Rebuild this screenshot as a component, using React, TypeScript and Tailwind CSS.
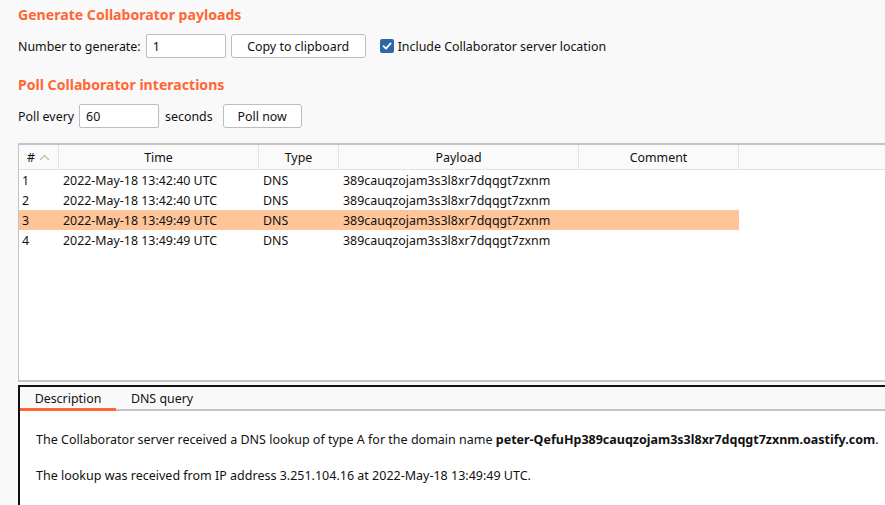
import React from "react";

const rows = [
  { n: "1", t: "2022-May-18 13:42:40 UTC", sel: false },
  { n: "2", t: "2022-May-18 13:42:40 UTC", sel: false },
  { n: "3", t: "2022-May-18 13:49:49 UTC", sel: true },
  { n: "4", t: "2022-May-18 13:49:49 UTC", sel: false },
];

const payload = "389cauqzojam3s3l8xr7dqqgt7zxnm";

export default function App() {
  return (
    <div
      className="w-[885px] h-[505px] overflow-hidden bg-[#f9f9f9] text-[#111] flex flex-col text-[12.4px]"
      style={{ fontFamily: '"Noto Sans", "Open Sans", sans-serif' }}
    >
      <div className="pl-[18px] flex flex-col">
        <div className="mt-[5px] h-[20px] leading-[20px] text-[14.1px] font-bold text-[#ff6633]">
          Generate Collaborator payloads
        </div>
        <div className="mt-[9px] h-[24px] flex items-center">
          <span className="pt-[2px]">Number to generate:</span>
          <div className="ml-[5px] w-[80px] h-[24px] bg-white border border-[#bdbdbd] rounded-[2px] flex items-center px-[6px] pt-[2px]">
            1
          </div>
          <div className="ml-[5px] w-[135px] h-[24px] bg-white border border-[#bdbdbd] rounded-[3px] flex items-center justify-center pt-[2px]">
            Copy to clipboard
          </div>
          <div className="ml-[14px] w-[14px] h-[14px] rounded-[2px] bg-[#2e67a6] flex items-center justify-center">
            <svg width="10" height="10" viewBox="0 0 10 10">
              <path d="M1.5 5.2 L4 7.6 L8.6 2.4" fill="none" stroke="white" strokeWidth="1.8" strokeLinecap="round" strokeLinejoin="round" />
            </svg>
          </div>
          <span className="ml-[4px] pt-[2px]">Include Collaborator server location</span>
        </div>
        <div className="mt-[17px] h-[20px] leading-[20px] text-[14.1px] font-bold text-[#ff6633]">
          Poll Collaborator interactions
        </div>
        <div className="mt-[9px] h-[24px] flex items-center">
          <span className="pt-[2px]">Poll every</span>
          <div className="ml-[5px] w-[80px] h-[24px] bg-white border border-[#bdbdbd] rounded-[2px] flex items-center px-[6px] pt-[2px]">
            60
          </div>
          <span className="ml-[6px] pt-[2px]">seconds</span>
          <div className="ml-[10px] w-[79px] h-[24px] bg-white border border-[#bdbdbd] rounded-[3px] flex items-center justify-center pt-[2px]">
            Poll now
          </div>
        </div>
      </div>

      <div className="ml-[18px] mt-[15px] h-[239px] bg-white border-t-2 border-l border-b-2 border-[#c4c4c4] flex flex-col">
        <div className="h-[25px] flex bg-[#fafafa] border-b border-[#e2e2e2]">
          <div className="w-[40px] flex items-center justify-center gap-[4px] border-r border-[#e2e2e2] pt-[3px]">
            <span>#</span>
            <svg width="11" height="7" viewBox="0 0 11 7" className="mb-[2px]">
              <path d="M1 6 L5.5 1.5 L10 6" fill="none" stroke="#b8b8b8" strokeWidth="1.1" />
            </svg>
          </div>
          <div className="w-[200px] flex items-center justify-center border-r border-[#e2e2e2] pt-[3px]">Time</div>
          <div className="w-[80px] flex items-center justify-center border-r border-[#e2e2e2] pt-[3px]">Type</div>
          <div className="w-[240px] flex items-center justify-center border-r border-[#e2e2e2] pt-[3px]">Payload</div>
          <div className="w-[160px] flex items-center justify-center border-r border-[#e2e2e2] pt-[3px]">Comment</div>
          <div className="flex-1" />
        </div>
        {rows.map((r) => (
          <div key={r.n} className="h-[20px] flex">
            <div className={`w-[720px] flex items-center pt-[3px] ${r.sel ? "bg-[#ffc599]" : ""}`}>
              <div className="w-[40px] pl-[3px]">{r.n}</div>
              <div className="w-[200px] pl-[4px]">{r.t}</div>
              <div className="w-[80px] pl-[4px]">DNS</div>
              <div className="w-[240px] pl-[4px]">{payload}</div>
              <div className="w-[160px]" />
            </div>
          </div>
        ))}
      </div>

      <div className="ml-[18px] mt-[3px] flex-1 flex flex-col border-t-2 border-l-2 border-[#111]">
        <div className="h-[24px] flex bg-[#f9f9f9] border-b-2 border-[#c4c4c4]">
          <div className="w-[96px] flex items-center justify-center border-b-[3px] border-[#ff6633] mb-[-2px] pt-[3px]">
            Description
          </div>
          <div className="w-[92px] flex items-center justify-center pt-[3px]">DNS query</div>
        </div>
        <div className="flex-1 bg-white pl-[16px] pt-[19px] whitespace-nowrap text-[12.5px]">
          <div className="h-[20px] leading-[20px]">
            The Collaborator server received a DNS lookup of type A for the domain name{" "}
            <span className="font-bold">peter-QefuHp{payload}.oastify.com</span>.
          </div>
          <div className="mt-[16px] h-[20px] leading-[20px]">
            The lookup was received from IP address 3.251.104.16 at 2022-May-18 13:49:49 UTC.
          </div>
        </div>
      </div>
    </div>
  );
}
